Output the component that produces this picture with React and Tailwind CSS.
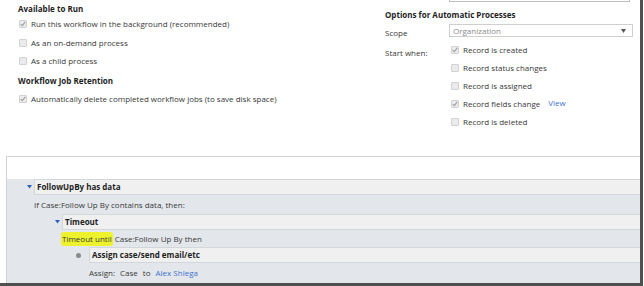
import React from "react";

const Check = ({ checked }) => (
  <span className="w-[8px] h-[8px] shrink-0 rounded-[1px] border border-[#d2d2d2] bg-[#ebebeb] flex items-center justify-center">
    {checked && (
      <svg width="6" height="6" viewBox="0 0 6 6">
        <path d="M0.7 3.1 L2.3 4.7 L5.3 0.9" stroke="#a0a0a0" strokeWidth="1.1" fill="none" />
      </svg>
    )}
  </span>
);

const Row = ({ checked, children, className = "" }) => (
  <div className={"flex items-center gap-[4px] " + className}>
    <Check checked={checked} />
    <span className="whitespace-nowrap">{children}</span>
  </div>
);

const Tri = () => (
  <svg width="5" height="4" viewBox="0 0 5 4" className="shrink-0">
    <path d="M0 0 L5 0 L2.5 3.5 Z" fill="#2b62c0" />
  </svg>
);

export default function App() {
  return (
    <div className="w-[644px] h-[286px] bg-white overflow-hidden font-['Open_Sans',sans-serif] text-[8px] text-[#383838]">
      <div className="w-[643px] h-[286px] flex flex-col border-r-[3px] border-b-[3px] border-[#505050]">
        {/* top settings */}
        <div className="h-[156px] shrink-0 flex">
          <div className="w-[385px] shrink-0 pl-[18px] pt-[1px] flex flex-col">
            <div className="h-[16px] flex items-center font-bold text-[#1e1e1e]">Available to Run</div>
            <Row checked className="h-[14px] ml-[1px]">Run this workflow in the background (recommended)</Row>
            <Row className="h-[14px] ml-[1px] mt-[5px]">As an on-demand process</Row>
            <Row className="h-[14px] ml-[1px] mt-[4px]">As a child process</Row>
            <div className="h-[14px] mt-[6px] flex items-center font-bold text-[#1e1e1e]">Workflow Job Retention</div>
            <Row checked className="h-[14px] ml-[1px] mt-[4px]">Automatically delete completed workflow jobs (to save disk space)</Row>
          </div>
          <div className="flex-1 flex flex-col">
            <div className="h-[2px] w-[181px] ml-[64px] border-x border-b border-[#bdbdbd]" />
            <div className="h-[14px] mt-[6px] flex items-center font-bold text-[#1e1e1e]">Options for Automatic Processes</div>
            <div className="flex mt-[2px]">
              <div className="w-[64px] shrink-0 mt-[2px] leading-[14px]">Scope</div>
              <div className="w-[184px] h-[13px] border border-[#cfcfcf] flex items-center justify-between pl-[3px] pr-[6px] text-[#8a8a8a]">
                <span>Organization</span>
                <svg width="5" height="4" viewBox="0 0 5 4">
                  <path d="M0 0 L5 0 L2.5 4 Z" fill="#555" />
                </svg>
              </div>
            </div>
            <div className="flex mt-[1px]">
              <div className="w-[64px] shrink-0 pt-[5px] leading-[14px]">Start when:</div>
              <div className="flex flex-col ml-[2px]">
                <Row checked className="h-[18px]">Record is created</Row>
                <Row className="h-[18px]">Record status changes</Row>
                <Row className="h-[18px]">Record is assigned</Row>
                <div className="h-[18px] flex items-center gap-[8px]">
                  <Row checked>Record fields change</Row>
                  <span className="text-[#3f72cc] -mt-[2px]">View</span>
                </div>
                <Row className="h-[18px]">Record is deleted</Row>
              </div>
            </div>
          </div>
        </div>

        {/* workflow steps panel */}
        <div className="flex-1 ml-[6px] border-t border-l border-[#cfd3d8] flex flex-col">
          <div className="h-[22px] bg-white shrink-0" />
          <div className="flex-1 bg-[#e3e7eb] flex flex-col">
            <div className="h-[16px] flex items-center">
              <div className="w-[27px] shrink-0 flex justify-end pr-[2px]"><Tri /></div>
              <div className="flex-1 h-full bg-[#f0f0f0] border-y border-l border-[#d3d6da] pl-[2px] flex items-center font-bold text-[#1e1e1e]">
                FollowUpBy has data
              </div>
            </div>
            <div className="h-[19px] pl-[27px] flex items-center">If Case:Follow Up By contains data, then:</div>
            <div className="h-[16px] flex items-center">
              <div className="w-[55px] shrink-0 flex justify-end pr-[2px]"><Tri /></div>
              <div className="flex-1 h-full bg-[#f0f0f0] border-y border-l border-[#d3d6da] pl-[2px] flex items-center font-bold text-[#1e1e1e]">
                Timeout
              </div>
            </div>
            <div className="h-[17px] pl-[54px] flex items-center">
              <span className="bg-[#eef22c] px-[1px] py-[1px] rounded-[3px]">Timeout until</span>
              <span className="ml-[2px]">Case:Follow Up By then</span>
            </div>
            <div className="h-[16px] flex items-center">
              <div className="w-[82px] shrink-0 flex justify-start pl-[69px]">
                <span className="w-[5px] h-[5px] rounded-full bg-[#8a8a8a]" />
              </div>
              <div className="flex-1 h-full bg-[#f0f0f0] border-y border-l border-[#d3d6da] pl-[2px] flex items-center font-bold text-[#1e1e1e]">
                Assign case/send email/etc
              </div>
            </div>
            <div className="h-[19px] pl-[82px] flex items-center gap-[5px]">
              <span>Assign:</span>
              <span>Case</span>
              <span>to</span>
              <span className="text-[#3f72cc]">Alex Shlega</span>
            </div>
          </div>
        </div>
      </div>
    </div>
  );
}
